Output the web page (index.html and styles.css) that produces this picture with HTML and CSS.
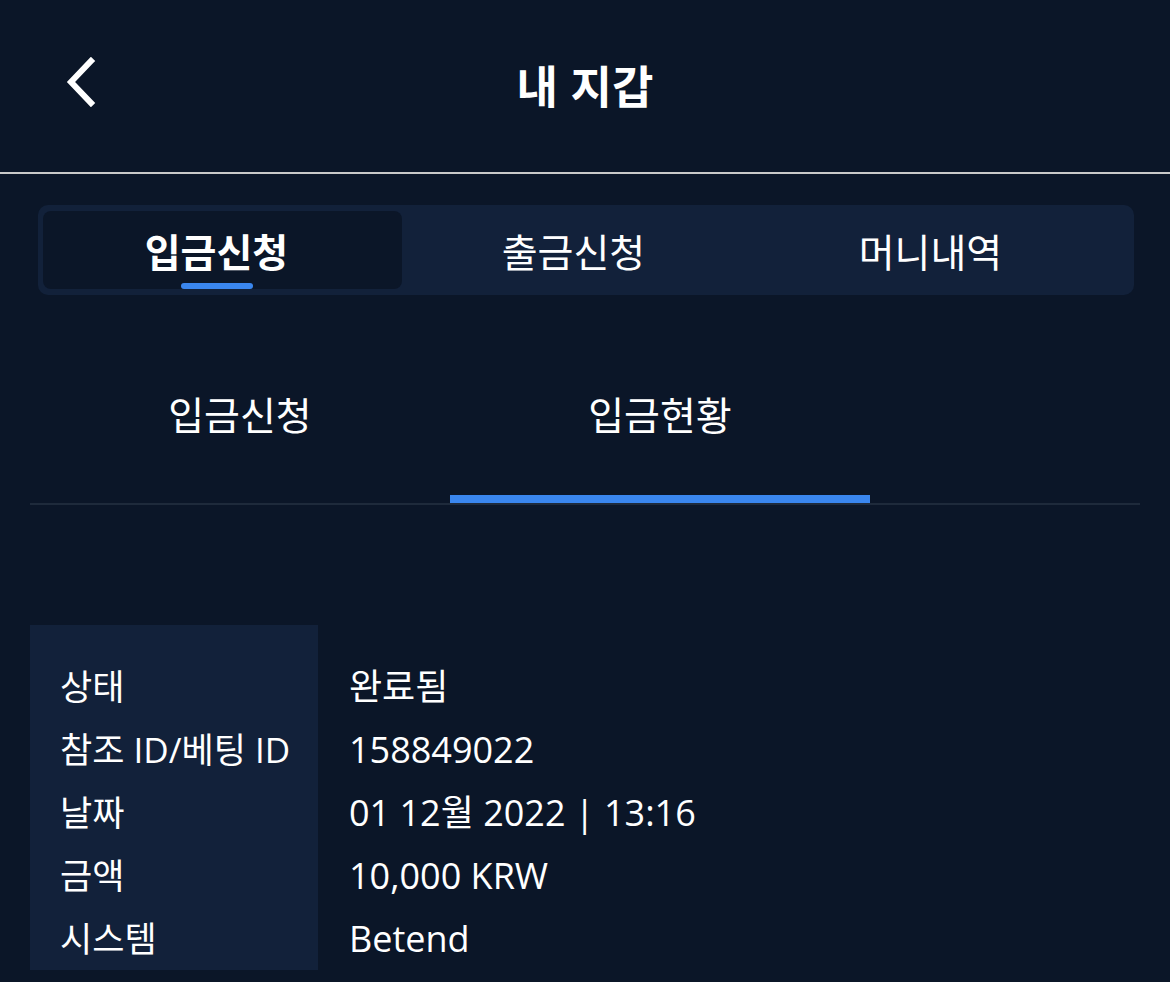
FILE: index.html
```html
<!DOCTYPE html>
<html lang="ko">
<head>
  <meta charset="UTF-8" />
  <meta name="viewport" content="width=device-width, initial-scale=1.0"/>
  <title>내 지갑</title>
  <link rel="stylesheet" href="styles.css">
</head>
<body>
  <header class="topbar">
    <button class="back" aria-label="뒤로">
      <svg width="32" height="50" viewBox="0 0 32 50"><path d="M27 4 L7 25 L27 46" fill="none" stroke="#fff" stroke-width="6" stroke-linecap="square"/></svg>
    </button>
    <h1>내 지갑</h1>
  </header>

  <nav class="segments">
    <div class="seg active"><span>입금신청</span></div>
    <div class="seg"><span>출금신청</span></div>
    <div class="seg"><span>머니내역</span></div>
  </nav>

  <div class="subtabs">
    <div class="subtab">입금신청</div>
    <div class="subtab active">입금현황</div>
  </div>

  <div class="detail">
    <div class="keys">
      <div>상태</div>
      <div>참조 ID/베팅 ID</div>
      <div>날짜</div>
      <div>금액</div>
      <div>시스템</div>
    </div>
    <div class="vals">
      <div>완료됨</div>
      <div>158849022</div>
      <div>01 12월 2022 | 13:16</div>
      <div>10,000 KRW</div>
      <div>Betend</div>
    </div>
  </div>
</body>
</html>
```

FILE: styles.css
```css
body { margin: 0; background: #0b1628; color: #fff; font-family: "Open Sans", "Noto Sans CJK KR", sans-serif; }
.topbar { position: relative; height: 172px; display: flex; align-items: center; justify-content: center; border-bottom: 2px solid #c9c9c9; }
.topbar h1 { margin: 0 0 4px; font-size: 45px; font-weight: 700; font-family: "Noto Sans CJK KR", sans-serif; }
.back { position: absolute; left: 64px; top: 57px; background: none; border: 0; padding: 0; }
.back svg { display: block; }

.segments { display: flex; margin: 31px 36px 0 38px; padding: 6px 0; background: #12213a; border-radius: 10px; }
.seg { flex: 0 0 357px; height: 78px; display: flex; align-items: center; justify-content: center; font-family: "Noto Sans CJK KR", sans-serif; font-size: 39px; position: relative; }
.seg span { position: relative; }
.seg.active { font-weight: 700; }
.seg.active::before { content: ""; position: absolute; top: 0; bottom: 0; left: 5px; right: -7px; background: #0b1628; border-radius: 8px; }
.seg.active::after { content: ""; position: absolute; bottom: 0; left: 50%; margin-left: -36px; width: 72px; height: 6px; border-radius: 3px; background: #3a86ee; }

.subtabs { display: flex; margin: 60px 30px 0; border-bottom: 2px solid #1e2a3b; }
.subtab { width: 420px; height: 148px; box-sizing: border-box; padding-top: 30px; text-align: center; font-family: "Noto Sans CJK KR", sans-serif; font-size: 39px; }
.subtab.active { border-bottom: 8px solid #3a86ee; margin-bottom: -2px; }

.detail { display: flex; margin: 120px 0 0 30px; font-size: 36px; line-height: 63px; }
.keys { width: 288px; box-sizing: border-box; padding: 30px 0 0 30px; background: #12213a; white-space: nowrap; font-size: 35px; }
.vals { padding: 30px 0 0 31px; white-space: nowrap; }
```
